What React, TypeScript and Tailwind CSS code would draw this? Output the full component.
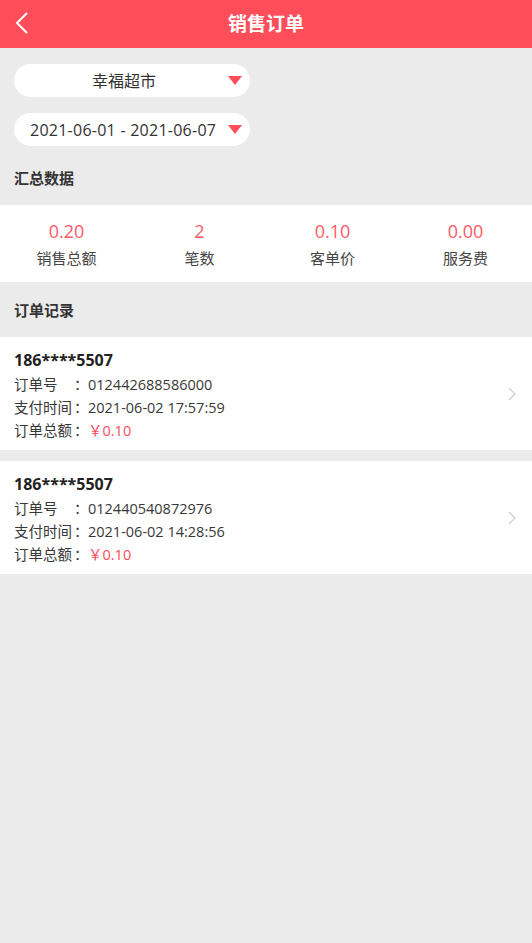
import React from "react";

const FONT = { fontFamily: '"Open Sans", "Noto Sans CJK SC", sans-serif' };

const stats = [
  { value: "0.20", label: "销售总额" },
  { value: "2", label: "笔数" },
  { value: "0.10", label: "客单价" },
  { value: "0.00", label: "服务费" },
];

const orders = [
  { phone: "186****5507", no: "012442688586000", time: "2021-06-02 17:57:59", total: "￥0.10" },
  { phone: "186****5507", no: "012440540872976", time: "2021-06-02 14:28:56", total: "￥0.10" },
];

function Caret() {
  return (
    <svg width="14" height="10" viewBox="0 0 14 10" className="shrink-0">
      <path d="M0 0 H14 L7 9 Z" fill="#ff4d5a" />
    </svg>
  );
}

function SelectBox({ text, center }: { text: string; center?: boolean }) {
  return (
    <div className="flex h-[33px] w-[236px] items-center gap-[10px] rounded-full bg-white pl-4 pr-2">
      <span
        className={`flex-1 whitespace-nowrap text-[16px] text-[#333] ${center ? "text-center" : "tracking-[0.25px]"}`}
      >
        {text}
      </span>
      <Caret />
    </div>
  );
}

function Row({ label, value, red }: { label: string; value: string; red?: boolean }) {
  return (
    <div className="flex h-[23px] items-center text-[14.5px] text-[#383838]">
      <span className="w-[60px] whitespace-nowrap">{label}</span>
      <span className="w-[14px] text-center">：</span>
      <span className={red ? "text-[#ff4d5a]" : ""}>{value}</span>
    </div>
  );
}

export default function App() {
  return (
    <div className="min-h-[943px] w-full bg-[#ebebeb]" style={FONT}>
      {/* top bar */}
      <div className="relative flex h-[48px] items-center justify-center bg-[#ff4d5a]">
        <svg width="14" height="22" viewBox="0 0 14 22" className="absolute left-[15px] top-[12px]">
          <path d="M12 1 L2 11 L12 21" stroke="#fff" strokeWidth="2" fill="none" />
        </svg>
        <span className="text-[19px] font-bold text-white">销售订单</span>
      </div>

      <div className="flex flex-col gap-4 px-[14px] pt-4">
        <SelectBox text="幸福超市" center />
        <SelectBox text="2021-06-01 - 2021-06-07" />
      </div>

      <div className="flex h-[59px] items-center px-[14px] pt-[6px] text-[15px] font-bold text-[#333]">汇总数据</div>

      <div className="grid h-[77px] grid-cols-4 bg-white">
        {stats.map((s) => (
          <div key={s.label} className="flex flex-col items-center justify-center gap-[6px]">
            <span className="text-[18px] leading-[22px] text-[#ff5966]">{s.value}</span>
            <span className="text-[15px] leading-[20px] text-[#444]">{s.label}</span>
          </div>
        ))}
      </div>

      <div className="flex h-[55px] items-center px-[14px] pt-[2px] text-[15px] font-bold text-[#333]">订单记录</div>

      <div className="flex flex-col gap-[11px]">
        {orders.map((o) => (
          <div key={o.no} className="relative flex h-[113px] flex-col bg-white px-[14px] pt-[10px]">
            <div className="h-[26px] text-[16px] font-bold leading-[26px] text-[#222]">{o.phone}</div>
            <Row label="订单号" value={o.no} />
            <Row label="支付时间" value={o.time} />
            <Row label="订单总额" value={o.total} red />
            <svg width="8" height="14" viewBox="0 0 8 14" className="absolute right-[16px] top-[50px]">
              <path d="M1 1 L7 7 L1 13" stroke="#d0d0d0" strokeWidth="1.3" fill="none" />
            </svg>
          </div>
        ))}
      </div>
    </div>
  );
}
